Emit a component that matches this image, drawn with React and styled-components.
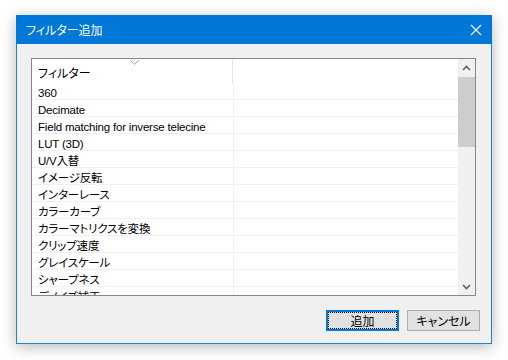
import React from "react";
import styled, { createGlobalStyle } from "styled-components";

const Global = createGlobalStyle`
  html, body { margin: 0; padding: 0; background: #ffffff; }
  body { font-family: "Liberation Sans", "Noto Sans CJK JP", sans-serif; }
  * { box-sizing: border-box; }
`;

const Page = styled.div`
  width: 508px;
  height: 360px;
  padding: 15px 16px;
  overflow: hidden;
`;

const Window = styled.div`
  width: 476px;
  height: 329px;
  background: #f0f0f0;
  border: 1px solid #1883d7;
  border-top: none;
  box-shadow: 0 3px 14px rgba(0, 0, 0, 0.28);
  display: flex;
  flex-direction: column;
`;

const TitleBar = styled.div`
  height: 30px;
  margin: 0 -1px;
  background: #0078d7;
  color: #ffffff;
  display: flex;
  align-items: center;
  justify-content: space-between;
  padding: 0 10px 0 10px;
  font-size: 12px;
  font-family: "Noto Sans CJK JP", sans-serif;
  font-feature-settings: "palt";
`;

const CloseIcon = styled.svg`
  width: 12px;
  height: 12px;
  display: block;
`;

const Body = styled.div`
  flex: 1;
  display: flex;
  flex-direction: column;
  padding: 14px 15px 12px 14px;
`;

const ListBox = styled.div`
  height: 238px;
  border: 1px solid #828790;
  background: #ffffff;
  display: flex;
  overflow: hidden;
`;

const ListContent = styled.div`
  flex: 1;
  display: flex;
  flex-direction: column;
  overflow: hidden;
`;

const HeaderRow = styled.div`
  height: 24px;
  flex: none;
  display: flex;
`;

const HeaderCell = styled.div`
  width: ${(p) => p.$w}px;
  flex: ${(p) => (p.$w ? "none" : "1")};
  display: flex;
  align-items: center;
  padding: 3px 0 0 6px;
  font-size: 12px;
  color: #000;
  border-right: ${(p) => (p.$w ? "1px solid #e5e5e5" : "none")};
  position: relative;
  font-family: "Noto Sans CJK JP", sans-serif;
  font-feature-settings: "palt";
`;

const SortGlyph = styled.svg`
  position: absolute;
  left: 98px;
  top: 1px;
  width: 9px;
  height: 5px;
`;

const Row = styled.div`
  height: 17px;
  flex: none;
  display: flex;
  border-bottom: 1px solid #f0f0f0;
`;

const Cell = styled.div`
  width: ${(p) => p.$w}px;
  flex: ${(p) => (p.$w ? "none" : "1")};
  display: flex;
  align-items: center;
  padding: 4px 0 0 6px;
  font-size: 11.5px;
  letter-spacing: -0.2px;
  font-feature-settings: "palt";
  color: #000;
  white-space: nowrap;
  border-right: ${(p) => (p.$w ? "1px solid #f0f0f0" : "none")};
  line-height: 12px;
`;

const ScrollBar = styled.div`
  width: 17px;
  flex: none;
  background: #f0f0f0;
  display: flex;
  flex-direction: column;
`;

const ArrowBtn = styled.div`
  height: 17px;
  flex: none;
  display: flex;
  align-items: center;
  justify-content: center;
`;

const Track = styled.div`
  flex: 1;
  display: flex;
  flex-direction: column;
`;

const Thumb = styled.div`
  height: 70px;
  margin-top: 1px;
  background: #cdcdcd;
`;

const ButtonRow = styled.div`
  display: flex;
  justify-content: flex-end;
  gap: 8px;
  margin-top: 14px;
  margin-right: -4px;
`;

const Button = styled.button`
  width: 73px;
  height: 21px;
  background: #e1e1e1;
  border: ${(p) => (p.$default ? "2px solid #0078d7" : "1px solid #adadad")};
  padding: 0;
  margin: 0;
  font-family: "Noto Sans CJK JP", sans-serif;
  font-feature-settings: "palt";
  font-size: 12px;
  color: #000;
  display: flex;
  align-items: center;
  justify-content: center;
  outline: ${(p) => (p.$default ? "1px dotted #000" : "none")};
  outline-offset: -3px;
`;

const items = [
  "360",
  "Decimate",
  "Field matching for inverse telecine",
  "LUT (3D)",
  "U/V入替",
  "イメージ反転",
  "インターレース",
  "カラーカーブ",
  "カラーマトリクスを変換",
  "クリップ速度",
  "グレイスケール",
  "シャープネス",
  "デノイズ補正",
];

export default function App() {
  return (
    <>
      <Global />
      <Page>
        <Window>
          <TitleBar>
            <span>フィルター追加</span>
            <CloseIcon viewBox="0 0 12 12">
              <path d="M1 1 L11 11 M11 1 L1 11" stroke="#fff" strokeWidth="1.1" fill="none" />
            </CloseIcon>
          </TitleBar>
          <Body>
            <ListBox>
              <ListContent>
                <HeaderRow>
                  <HeaderCell $w={201}>
                    フィルター
                    <SortGlyph viewBox="0 0 9 5">
                      <path d="M0.5 0.5 L4.5 4.5 L8.5 0.5" stroke="#a0a0a0" fill="none" />
                    </SortGlyph>
                  </HeaderCell>
                  <HeaderCell />
                </HeaderRow>
                {items.map((t) => (
                  <Row key={t}>
                    <Cell $w={202}>{t}</Cell>
                    <Cell />
                  </Row>
                ))}
              </ListContent>
              <ScrollBar>
                <ArrowBtn>
                  <svg width="9" height="6" viewBox="0 0 9 6">
                    <path d="M1 5 L4.5 1.5 L8 5" stroke="#606060" strokeWidth="1.6" fill="none" />
                  </svg>
                </ArrowBtn>
                <Track>
                  <Thumb />
                </Track>
                <ArrowBtn>
                  <svg width="9" height="6" viewBox="0 0 9 6">
                    <path d="M1 1 L4.5 4.5 L8 1" stroke="#606060" strokeWidth="1.6" fill="none" />
                  </svg>
                </ArrowBtn>
              </ScrollBar>
            </ListBox>
            <ButtonRow>
              <Button $default>追加</Button>
              <Button>キャンセル</Button>
            </ButtonRow>
          </Body>
        </Window>
      </Page>
    </>
  );
}
